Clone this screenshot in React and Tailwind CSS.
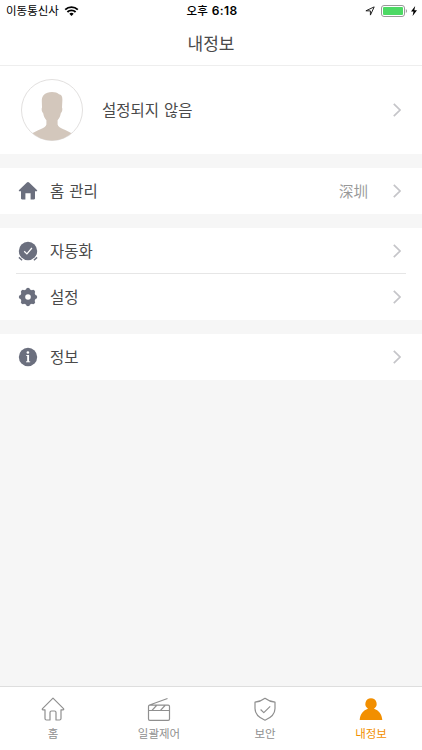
const Chevron = () => (
    <svg
        className="h-[14px] w-[8px] shrink-0"
        viewBox="0 0 8 14"
        fill="none"
        stroke="#c5c5c9"
        strokeWidth="1.7"
    >
        <path d="M.8 .8 7 7 .8 13.2" />
    </svg>
);

const StatusBar = () => (
    <div className="flex h-[21px] items-center text-black">
        <div className="flex flex-1 items-center gap-[5px] pl-[6px]">
            <span className="-mt-px text-[11.5px] leading-[20px]">
                이동통신사
            </span>
            <svg className="h-[10px] w-[15px]" viewBox="0 0 14 10">
                <path
                    d="M.7 3.6a9.2 9.2 0 0 1 12.6 0M2.9 6a6 6 0 0 1 8.2 0"
                    fill="none"
                    stroke="#000"
                    strokeWidth="1.9"
                />
                <path d="M7 10 4.8 7.7a3.2 3.2 0 0 1 4.4 0z" />
            </svg>
        </div>
        <div className="flex items-center gap-[4px] pl-px text-[11.5px] font-medium leading-[20px]">
            <span className="-mt-px">오후</span>
            <span className="font-['Inter'] text-[12px] font-semibold tracking-[0.35px]">
                6:18
            </span>
        </div>
        <div className="flex flex-1 items-center justify-end pr-[5px]">
            <svg
                className="mr-[6px] h-[10px] w-[10px]"
                viewBox="0 0 10 10"
                fill="none"
                stroke="#222"
                strokeLinejoin="round"
            >
                <path d="M9.2 .9 5.4 9.1V4.9L.9 4.8z" />
            </svg>
            <svg className="mr-[3px] h-[12px] w-[27px]" viewBox="0 0 27 12">
                <rect
                    x=".5"
                    y=".5"
                    width="23"
                    height="11"
                    rx="2.5"
                    fill="none"
                    stroke="#999"
                />
                <rect x="2" y="2" width="20" height="8" rx="1" fill="#4cd964" />
                <path d="M24.8 4v4c1.6-.6 1.6-3.4 0-4z" fill="#999" />
            </svg>
            <svg className="h-[10px] w-[6px]" viewBox="0 0 6 10">
                <path d="M4.2 0 0 5.6h2.5L1.6 10 6 4.2H3.3z" />
            </svg>
        </div>
    </div>
);

const Avatar = () => (
    <svg className="h-[62px] w-[62px] shrink-0" viewBox="0 0 62 62">
        <clipPath id="avatar">
            <circle cx="31" cy="31" r="30.5" />
        </clipPath>
        <circle cx="31" cy="31" r="30.5" fill="#fff" stroke="#e2e0df" />
        <path
            clipPath="url(#avatar)"
            fill="#d3c7bc"
            d="M31 13c3 0 5.500.8 7 2.200 2.300.3 3.500 2.100 3.400 5.500L41 28.500c.8 1.300.2 4.500-1.200 5.700-.6 3.300-1.500 5.100-3.200 7.100V45.500c1 4.500 9.500 4.800 15.400 10V62H10v-6.500c5.800-5 14.400-5.500 15.400-10v-4.200c-1.700-2-2.600-3.800-3.200-7.100-1.400-1.200-2-4.400-1.200-5.700l-.2-6.500C20.800 16.500 24 13 31 13z"
        />
    </svg>
);

const rowIcons = {
    home: (
        <path d="M10 .9c.5 0 .8.2 1.100.5l7.800 7.600c.6.7.3 1.300-.5 1.300H17v6.900c0 .8-.4 1.200-1.200 1.200h-3.200v-6.200H7.400v6.200H4.200c-.8 0-1.200-.4-1.200-1.200v-6.900H1.600c-.8 0-1.100-.6-.5-1.300l7.800-7.600c.3-.3.6-.5 1.100-.5z" />
    ),
    automation: (
        <>
            <circle cx="10" cy="10" r="9.2" />
            <path
                d="M.9 16.400l3.200 2.800M19.100 16.400l-3.200 2.800"
                stroke="currentColor"
                strokeWidth="1.4"
            />
            <path
                d="M6.200 10.300l2.700 2.600 5-5.900"
                fill="none"
                stroke="#fff"
                strokeWidth="1.3"
            />
        </>
    ),
    settings: (
        <>
            <circle cx="10" cy="10" r="7.7" />
            <path
                d="M10 2.800v14.400M2.800 10h14.400M4.900 4.900l10.200 10.200M15.100 4.900 4.900 15.100"
                stroke="currentColor"
                strokeWidth="4"
                strokeLinecap="round"
            />
            <circle cx="10" cy="10" r="2.8" fill="#fff" />
        </>
    ),
    info: (
        <>
            <circle cx="10" cy="10" r="9.2" />
            <circle cx="9.9" cy="5.5" r="1.3" fill="#fff" />
            <path
                d="M8.200 8.500h1.800M8 14.800h4.200"
                fill="none"
                stroke="#fff"
                strokeWidth=".9"
            />
            <path d="M10.100 8v6.900" stroke="#fff" strokeWidth="1.9" />
        </>
    ),
};

const Row = ({ icon, label, value }) => (
    <div className="flex h-[46px] items-center pl-[18px] pr-[21px]">
        <svg
            className="h-5 w-5 shrink-0 text-[#6b6f7e]"
            viewBox="0 0 20 20"
            fill="currentColor"
        >
            {rowIcons[icon]}
        </svg>
        <span className="-mt-0.5 ml-3 flex-1 text-[15.5px] leading-6 [word-spacing:1.5px]">
            {label}
        </span>
        {value && (
            <span className="mr-[25px] font-['Noto_Sans_CJK_SC'] text-[14.5px] leading-6 text-[#999]">
                {value}
            </span>
        )}
        <Chevron />
    </div>
);

const tabs = [
    {
        label: '홈',
        icon: (
            <path d="M12 1.2 1.500 11.700c-.5.6-.2 1.100.5 1.100h2v8.700c0 1 .5 1.500 1.500 1.500H9v-7.500c0-1 .5-1.500 1.500-1.500h3c1 0 1.500.5 1.500 1.500V23h3.500c1 0 1.500-.5 1.500-1.500v-8.700h2c.7 0 1-.5.5-1.100z" />
        ),
    },
    {
        label: '일괄제어',
        icon: (
            <path d="M1.500 9.500v12.500c0 .9.4 1.300 1.300 1.300h18.400c.9 0 1.300-.4 1.300-1.300V9.500c0-.9-.4-1.300-1.300-1.300H2.800c-.9 0-1.300.4-1.300 1.300zM1.500 13.500h21M1.900 8.300 20.500 1.500M5 13.300l4.500-4.800M13.500 13.300l4.500-4.800" />
        ),
    },
    {
        label: '보안',
        icon: (
            <path d="M12 1.300C9 3.600 5.500 5 2 5.200v6.300c0 5 4.200 9.300 10 11.700 5.800-2.400 10-6.700 10-11.700V5.200C18.500 5 15 3.600 12 1.300zM7.600 12.500l3.200 3.100 6.400-6.200" />
        ),
    },
    {
        label: '내정보',
        active: true,
        icon: (
            <path
                fill="currentColor"
                stroke="none"
                d="M12 1.200a5.700 5.700 0 0 1 3 10.500c4.700 1.400 8 5.500 8.300 11.300H.7c.3-5.800 3.600-9.900 8.300-11.300a5.700 5.700 0 0 1 3-10.500z"
            />
        ),
    },
];

const TabBar = () => (
    <div className="grid h-16 w-[424px] grid-cols-4 border-t border-[#dedede] bg-white">
        {tabs.map((tab) => (
            <div
                key={tab.label}
                className={`flex flex-col items-center pt-[10px] ${
                    tab.active ? 'text-[#f28f00]' : 'text-[#8f8f8f]'
                }`}
            >
                <svg
                    className="h-6 w-6"
                    viewBox="0 0 24 24"
                    fill="none"
                    stroke="currentColor"
                    strokeWidth="1.2"
                    strokeLinejoin="round"
                >
                    {tab.icon}
                </svg>
                <span className="mt-[3px] text-[11.5px] leading-[18px]">
                    {tab.label}
                </span>
            </div>
        ))}
    </div>
);

const App = () => {
    return (
        <div className="flex h-[750px] w-[422px] flex-col overflow-hidden bg-[#f6f6f6] font-['Noto_Sans_CJK_KR',sans-serif] text-[#4a4a4a]">
            <header className="h-[66px] border-b border-[#eee] bg-white">
                <StatusBar />
                <h1 className="text-center text-[17px] leading-[43px]">
                    내정보
                </h1>
            </header>
            <main className="flex flex-1 flex-col gap-[14px]">
                <div className="flex h-[88px] items-center bg-white pl-[20.5px] pr-[21px]">
                    <Avatar />
                    <span className="-mt-0.5 ml-[19.5px] flex-1 text-[15.5px] leading-6 [word-spacing:1.5px]">
                        설정되지 않음
                    </span>
                    <Chevron />
                </div>
                <div className="bg-white">
                    <Row icon="home" label="홈 관리" value="深圳" />
                </div>
                <div className="bg-white">
                    <Row icon="automation" label="자동화" />
                    <div className="-mt-px mx-4 h-px bg-[#e6e6e6]" />
                    <Row icon="settings" label="설정" />
                </div>
                <div className="bg-white">
                    <Row icon="info" label="정보" />
                </div>
            </main>
            <TabBar />
        </div>
    );
};

export default App;
